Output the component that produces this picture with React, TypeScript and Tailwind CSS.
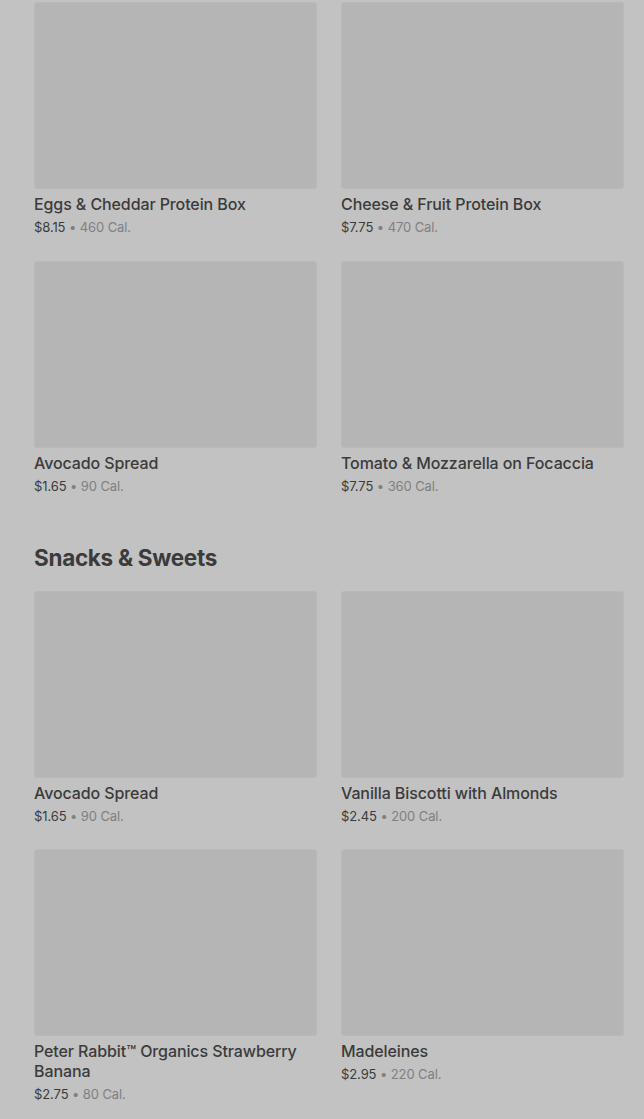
// Menu grid — items under a dimmed overlay

interface Item {
  name: string; price: string; cal: string
}

const TOP: Item[] = [
  { name: 'Eggs & Cheddar Protein Box', price: '$8.15', cal: '460 Cal.' },
  { name: 'Cheese & Fruit Protein Box', price: '$7.75', cal: '470 Cal.' },
  { name: 'Avocado Spread', price: '$1.65', cal: '90 Cal.' },
  { name: 'Tomato & Mozzarella on Focaccia', price: '$7.75', cal: '360 Cal.' },
]

const SNACKS: Item[] = [
  { name: 'Avocado Spread', price: '$1.65', cal: '90 Cal.' },
  { name: 'Vanilla Biscotti with Almonds', price: '$2.45', cal: '200 Cal.' },
  { name: 'Peter Rabbit™ Organics Strawberry Banana', price: '$2.75', cal: '80 Cal.' },
  { name: 'Madeleines', price: '$2.95', cal: '220 Cal.' },
]

function Card({ item }: { item: Item }) {
  return (
    <div>
      <div className="h-[187px] rounded-[3px] bg-[#b5b5b5] border border-[#b9b9b9]" />
      <p className="mt-[5px] text-[16px] leading-5 font-medium text-[#3b3b3b] tracking-[-0.1px]">{item.name}</p>
      <p className="mt-[3px] text-[13px] leading-5 text-[#3b3b3b] tracking-[-0.1px]">
        {item.price} <span className="text-[#808080]">• {item.cal}</span>
      </p>
    </div>
  )
}

export default function App() {
  return (
    <div className="min-h-[1119px] bg-[#c2c2c2] pl-[34px] pr-[20px] pt-[2px] font-['Inter',sans-serif]">
      <div className="grid grid-cols-2 gap-x-[24px] gap-y-[24px]">
        {TOP.map((it, i) => <Card key={i} item={it} />)}
      </div>
      <h2 className="mt-[46px] mb-[17px] text-[22.5px] leading-8 font-bold text-[#3b3b3b] tracking-[-0.3px]">Snacks &amp; Sweets</h2>
      <div className="grid grid-cols-2 gap-x-[24px] gap-y-[23px]">
        {SNACKS.map((it, i) => <Card key={i} item={it} />)}
      </div>
    </div>
  )
}
